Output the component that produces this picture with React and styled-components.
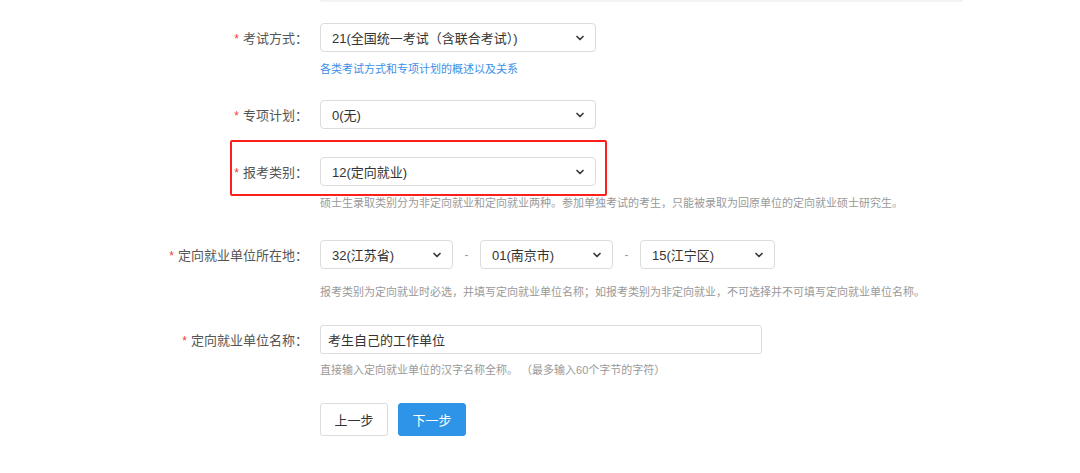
import React from "react";
import styled, { createGlobalStyle } from "styled-components";
import { ChevronDown } from "lucide-react";

const GlobalStyle = createGlobalStyle`
  html, body {
    margin: 0;
    padding: 0;
    background: #fff;
  }
  body {
    font-family: "Liberation Sans", "Noto Sans CJK SC", sans-serif;
    color: #333;
  }
`;

const Page = styled.div`
  position: relative;
  width: 1080px;
  height: 473px;
  overflow: hidden;
  background: #fff;
`;

const TopEdge = styled.div`
  margin-left: 320px;
  width: 643px;
  height: 2px;
  background: #f3f3f3;
  border-radius: 0 0 2px 2px;
`;

const Form = styled.div`
  padding-top: 21px;
`;

const Row = styled.div`
  display: grid;
  grid-template-columns: 308px 1fr;
  column-gap: 12px;
  margin-top: ${(p) => p.$gap || 0}px;
`;

const Label = styled.div`
  height: 29px;
  display: flex;
  align-items: center;
  justify-content: flex-end;
  font-size: 13px;
  color: #555;
  white-space: nowrap;
`;

const Star = styled.span`
  color: #f04134;
  margin-right: 4px;
  font-size: 12px;
  position: relative;
  top: 1px;
`;

const Field = styled.div`
  display: flex;
  flex-direction: column;
  align-items: flex-start;
`;

const Controls = styled.div`
  display: flex;
  align-items: center;
`;

const Select = styled.div`
  box-sizing: border-box;
  width: ${(p) => p.$width}px;
  height: 29px;
  border: 1px solid #dcdcdc;
  border-radius: 4px;
  padding: 0 9px 0 11px;
  display: flex;
  align-items: center;
  justify-content: space-between;
  font-size: 13px;
  color: #333;
  background: #fff;
  white-space: nowrap;

  svg {
    flex-shrink: 0;
    color: #3a3a3a;
  }
`;

const Dash = styled.span`
  width: 27px;
  text-align: center;
  color: #999;
  font-size: 12px;
`;

const Input = styled.div`
  box-sizing: border-box;
  width: 442px;
  height: 29px;
  border: 1px solid #dcdcdc;
  border-radius: 3px;
  padding: 0 7px;
  display: flex;
  align-items: center;
  font-size: 13px;
  color: #333;
`;

const Help = styled.div`
  margin-top: ${(p) => p.$gap}px;
  font-size: 11px;
  line-height: 18px;
  color: ${(p) => (p.$link ? "#3c8fe8" : "#999")};
  white-space: pre;
`;

const Buttons = styled.div`
  display: flex;
  gap: 10px;
  margin: 24px 0 0 320px;
`;

const Button = styled.div`
  box-sizing: border-box;
  width: 68px;
  height: 33px;
  border-radius: 3px;
  display: flex;
  align-items: center;
  justify-content: center;
  font-size: 13px;
  border: 1px solid ${(p) => (p.$primary ? "#2d94e7" : "#dcdcdc")};
  background: ${(p) => (p.$primary ? "#2d94e7" : "#fff")};
  color: ${(p) => (p.$primary ? "#fff" : "#333")};
`;

const Highlight = styled.div`
  position: absolute;
  left: 230px;
  top: 140px;
  width: 377px;
  height: 56px;
  box-sizing: border-box;
  border: 2px solid #ff1f1a;
  border-radius: 2px;
  pointer-events: none;
`;

const Chevron = () => <ChevronDown size={12} strokeWidth={3.4} />;

const Dropdown = ({ width, value }) => (
  <Select $width={width}>
    <span>{value}</span>
    <Chevron />
  </Select>
);

const FormRow = ({ label, gap, children }) => (
  <Row $gap={gap}>
    <Label>
      <Star>*</Star>
      {label}
    </Label>
    <Field>{children}</Field>
  </Row>
);

export default function App() {
  return (
    <Page>
      <GlobalStyle />
      <TopEdge />
      <Form>
        <FormRow label="考试方式：">
          <Dropdown width={276} value="21(全国统一考试（含联合考试）)" />
          <Help $gap={8} $link>
            各类考试方式和专项计划的概述以及关系
          </Help>
        </FormRow>
        <FormRow label="专项计划：" gap={22}>
          <Dropdown width={276} value="0(无)" />
        </FormRow>
        <FormRow label="报考类别：" gap={28}>
          <Dropdown width={276} value="12(定向就业)" />
          <Help $gap={8}>
            硕士生录取类别分为非定向就业和定向就业两种。参加单独考试的考生，只能被录取为回原单位的定向就业硕士研究生。
          </Help>
        </FormRow>
        <FormRow label="定向就业单位所在地：" gap={28}>
          <Controls>
            <Dropdown width={133} value="32(江苏省)" />
            <Dash>-</Dash>
            <Dropdown width={133} value="01(南京市)" />
            <Dash>-</Dash>
            <Dropdown width={135} value="15(江宁区)" />
          </Controls>
          <Help $gap={14}>
            报考类别为定向就业时必选，并填写定向就业单位名称；如报考类别为非定向就业，不可选择并不可填写定向就业单位名称。
          </Help>
        </FormRow>
        <FormRow label="定向就业单位名称：" gap={24}>
          <Input>考生自己的工作单位</Input>
          <Help $gap={7}>
            {"直接输入定向就业单位的汉字名称全称。 （最多输入60个字节的字符）"}
          </Help>
        </FormRow>
        <Buttons>
          <Button>上一步</Button>
          <Button $primary>下一步</Button>
        </Buttons>
      </Form>
      <Highlight />
    </Page>
  );
}
